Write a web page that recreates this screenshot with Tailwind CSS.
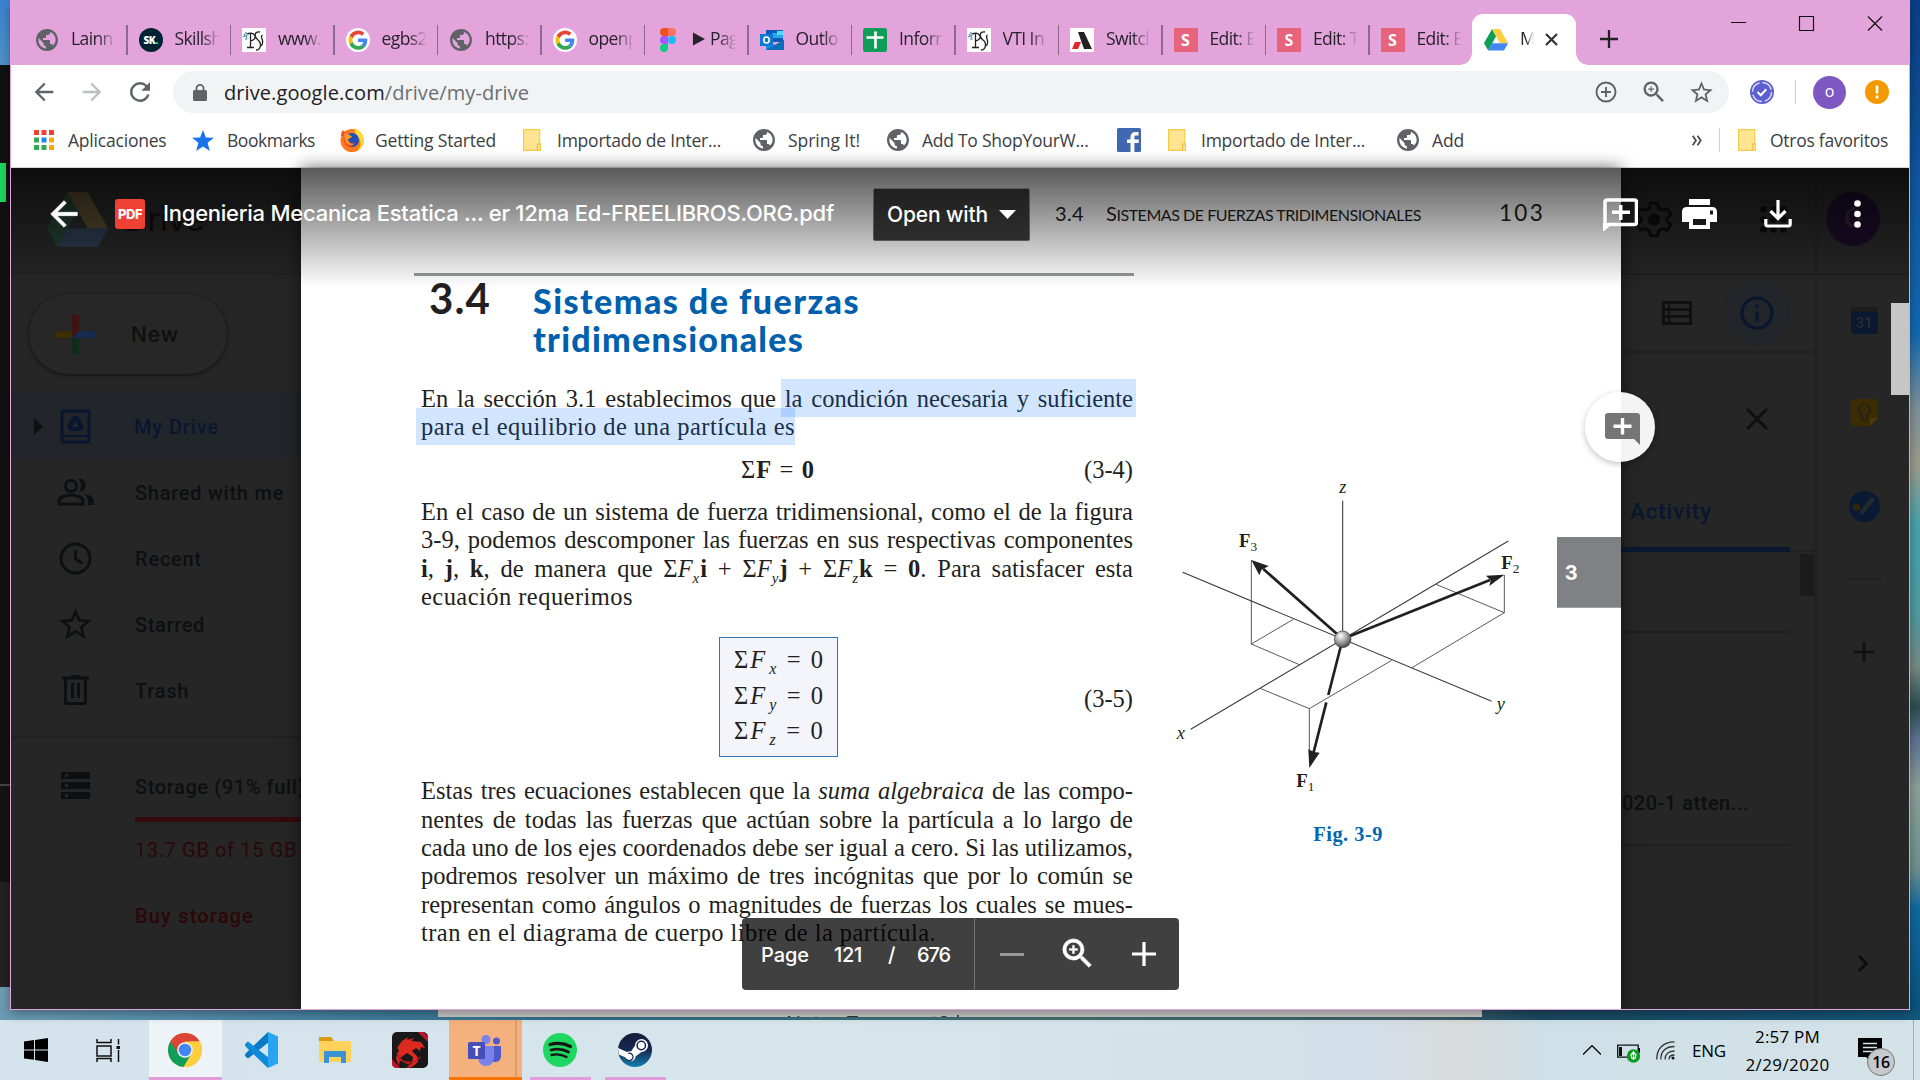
<!DOCTYPE html>
<html lang="es">
<head>
  <meta charset="UTF-8" />
  <meta name="viewport" content="width=device-width, initial-scale=1.0"/>
  <title>My Drive - Google Drive</title>
  <script src="https://cdn.jsdelivr.net/npm/@tailwindcss/browser@4"></script>
</head>
<body class="w-[1920px] h-[1080px] overflow-hidden bg-[#3d82a6]">

  <!-- Shared icons -->
  <svg class="hidden">
    <symbol id="globe" viewBox="0 0 24 24"><path fill="#5f6368" d="M12 1C5.900 1 1 5.900 1 12s4.900 11 11 11 11-4.900 11-11S18.100 1 12 1zm-1 19.500c-4.300-.5-7.600-4.200-7.600-8.500 0-.7.100-1.300.2-1.900L8.500 15v1c0 1.100 1 2.200 2.500 2.200v2.300zm6.900-3c-.3-.9-1-1.500-1.900-1.500h-1v-3c0-.6-.5-1-1-1H8v-2h2c.6 0 1-.5 1-1V7h2c1.100 0 2-.9 2-2v-.9c3.300 1.200 5.600 4.300 5.600 7.900 0 2.200-1 4.100-2.700 5.500z"/></symbol>
    <symbol id="google" viewBox="0 0 48 48"><circle cx="24" cy="24" r="24" fill="#fff"/><g transform="translate(5 5) scale(.8)"><path fill="#ea4335" d="M24 9.500c3.540 0 6.710 1.220 9.210 3.600l6.850-6.850C35.900 2.380 30.470 0 24 0 14.620 0 6.510 5.380 2.560 13.220l7.980 6.190C12.430 13.720 17.740 9.500 24 9.500z"/><path fill="#4285f4" d="M46.980 24.550c0-1.570-.15-3.090-.38-4.550H24v9.020h12.940c-.58 2.960-2.260 5.480-4.780 7.180l7.730 6c4.510-4.180 7.090-10.360 7.090-17.650z"/><path fill="#fbbc05" d="M10.530 28.590A14.500 14.500 0 0 1 9.770 24c0-1.600.27-3.140.76-4.590l-7.980-6.190A23.900 23.900 0 0 0 0 24c0 3.880.92 7.540 2.560 10.780z"/><path fill="#34a853" d="M24 48c6.480 0 11.930-2.130 15.890-5.810l-7.730-6c-2.150 1.450-4.920 2.300-8.160 2.300-6.260 0-11.570-4.220-13.470-9.910l-7.980 6.190C6.510 42.620 14.620 48 24 48z"/></g></symbol>
    <symbol id="pss" viewBox="0 0 24 24"><path fill="#fff" d="M0 0h24v24H0z"/><path fill="none" stroke="#4f93ad" stroke-width="1.300" stroke-dasharray="2 1" d="M1 9l6-3M2 6l4 5M4 4v8"/><path fill="none" stroke="#222" stroke-width="1.300" d="M8.500 5v14M5 19.500h7M5 6c8-4 12 6 3 7M18 4c-6-1-6 5-2 8s3 10-2 10M20.500 7c-3 2 1 4 0 8s-1 2-1 3"/></symbol>
    <symbol id="figma" viewBox="0 0 24 24"><path fill="#f24e1e" d="M12 0v8H8a4 4 0 0 1 0-8z"/><path fill="#ff7262" d="M12 0h4a4 4 0 0 1 0 8h-4z"/><path fill="#a259ff" d="M12 8v8H8a4 4 0 0 1 0-8z"/><circle cx="16" cy="12" r="4" fill="#1abcfe"/><path fill="#0acf83" d="M8 16h4v4a4 4 0 1 1-4-4z"/></symbol>
    <symbol id="outlook" viewBox="0 0 24 24"><path fill="#0a5cb5" d="M6 2h17v12H6z"/><path fill="#28a8ea" d="M12 5h5v5h-5zM17 5h6v5h-6z"/><path fill="#50d9ff" d="M17 3h6v4h-6z"/><path fill="#1490df" d="M6 12l9 5 9-5v10H6z"/><path fill="#0f6cbd" d="M6 22l18-10v10z"/><path fill="#0f78d4" d="M0 6h13v12H0z"/><ellipse cx="6.500" cy="12" rx="2.700" ry="3" fill="none" stroke="#fff" stroke-width="1.600"/></symbol>
    <symbol id="sheets" viewBox="0 0 24 24"><rect width="24" height="24" rx="2.500" fill="#0f9d58"/><path stroke="#fff" stroke-width="2.600" d="M12.500 3.500v17M3.500 9.500h17"/></symbol>
    <symbol id="switch" viewBox="0 0 24 24"><path fill="#fff" d="M0 0h24v24H0z"/><path fill="#222" d="M8 4h6l8 17h-8z"/><path fill="#e8222c" d="M5 14h6l-3 7H2z"/></symbol>
    <symbol id="folder" viewBox="0 0 18 22"><path fill="#ffe591" stroke="#f5cc4a" stroke-width="1.200" d="M.6.6h16.100v14.200h.8v6.600H.6z"/><path fill="none" stroke="#f0bd3a" stroke-width="1.200" d="M14.500 21v-6h3"/></symbol>
    <symbol id="drive" viewBox="0 0 24 22"><path fill="#0f9d58" d="M8 0l4.100 7.200L4.200 21.500 0 14.300z"/><path fill="#ffcd40" d="M8 0h8l8 14.300h-8z"/><path fill="#4285f4" d="M8.100 14.300H24l-4 7.200H4.200z"/></symbol>
    <symbol id="star" viewBox="0 0 24 24"><path d="M22 9.240l-7.190-.62L12 2 9.190 8.630 2 9.240l5.460 4.730L5.820 21 12 17.270 18.180 21l-1.630-7.030zM12 15.400l-3.760 2.270 1-4.280-3.320-2.880 4.380-.38L12 6.100l1.710 4.040 4.380.38-3.320 2.880 1 4.280z"/></symbol>
    <symbol id="zoom" viewBox="0 0 24 24"><path d="M15.500 14h-.79l-.28-.27A6.470 6.470 0 0 0 16 9.500 6.500 6.500 0 1 0 9.500 16c1.610 0 3.090-.59 4.230-1.570l.27.28v.79l5 4.990L20.490 19zm-6 0a4.500 4.500 0 1 1 0-9 4.500 4.500 0 0 1 0 9zm.5-7H9v2H7v1h2v2h1v-2h2V9h-2z"/></symbol>
    <symbol id="arrow" viewBox="0 0 24 24"><path d="M20 11H7.830l5.590-5.590L12 4l-8 8 8 8 1.410-1.410L7.830 13H20z"/></symbol>
  </svg>

  <div class="relative flex h-[1020px] bg-[linear-gradient(to_right,#6d9fb8,#4b87a8_15%,#2f6e8c_30%,#44706f_55%,#3c5f68_75%,#1b4a63_80%,#12577c)]">

    <!-- Left strip of the desktop -->
    <div class="w-[10px] h-[1020px] flex flex-col shrink-0">
      <div class="h-[65px] bg-[linear-gradient(#3b83d0,#4f92ca)]"></div>
      <div class="h-[98px] bg-[#111]"></div>
      <div class="h-[39px] w-[6px] bg-[#1ed760] shadow-[4px_0_0_#111]"></div>
      <div class="h-[582px] bg-[#111]"></div>
      <div class="h-[2px] bg-[#444]"></div>
      <div class="h-[96px] bg-[#141414]"></div>
      <div class="h-[105px] bg-[#232323]"></div>
      <div class="h-[33px] bg-[#6d9cb3]"></div>
    </div>

    <!-- Browser window -->
    <div class="w-[1900px] h-[1010px] shrink-0 border-x border-b border-[#e3a4dc] bg-white flex flex-col overflow-hidden shadow-[0_4px_10px_rgba(0,0,0,0.35)] z-10">

      <!-- Tab strip -->
      <div class="h-[65px] shrink-0 bg-[#e3a4dc] flex items-end text-[17.5px] text-[#27232b] font-['Open_Sans',sans-serif]">
        <div class="flex h-[51px] pl-[13px]">
          <div id="tabs" class="flex"></div>
          <div class="relative w-[103.500px] -ml-px bg-white rounded-t-[11px] flex items-center pl-[12px]">
            <div class="absolute -left-[12px] bottom-0 size-3 bg-[radial-gradient(circle_at_0_0,transparent_11.500px,white_12px)]"></div>
            <div class="absolute -right-[12px] bottom-0 size-3 bg-[radial-gradient(circle_at_100%_0,transparent_11.500px,white_12px)]"></div>
            <svg class="w-6 h-[22px] shrink-0"><use href="#drive"/></svg>
            <span class="ml-[12px] mb-[2px] w-[14px] overflow-hidden whitespace-nowrap [mask-image:linear-gradient(to_right,black_40%,transparent)]">M</span>
            <svg class="ml-[11px] size-[13px]" viewBox="0 0 13 13"><path stroke="#2f3236" stroke-width="2.200" d="M1 1l11 11M12 1L1 12"/></svg>
          </div>
        </div>
        <svg class="ml-[24px] mb-[17px] size-[18px]" viewBox="0 0 18 18"><path stroke="#222" stroke-width="2.300" d="M9 0v18M0 9h18"/></svg>
        <svg class="ml-auto mr-[25px] mb-[33px] w-[153px] h-[17px]" viewBox="0 0 153 17"><path fill="none" stroke="#111" stroke-width="1.200" d="M0 7.500h15M68.500 1.500h14v14h-14zM137 1.500l14 14M151 1.500l-14 14"/></svg>
      </div>

      <!-- Address bar -->
      <div class="h-[54px] shrink-0 pt-[6px] flex font-['Open_Sans',sans-serif]">
        <div class="h-[42px] w-[162px] pl-[19px] flex items-center">
          <svg class="size-7" fill="#5f6368"><use href="#arrow"/></svg>
          <svg class="size-7 ml-[20px] rotate-180" fill="#bdbfc1"><use href="#arrow"/></svg>
          <svg class="size-[30px] ml-[19px]" viewBox="0 0 24 24" fill="#5f6368"><path d="M17.650 6.350A7.960 7.960 0 0 0 12 4a8 8 0 1 0 7.730 10h-2.080A6 6 0 1 1 12 6c1.660 0 3.140.69 4.220 1.780L13 11h7V4z"/></svg>
        </div>
        <div class="h-[42px] w-[1556px] rounded-full bg-[#f1f3f4] flex items-center pl-[20px] text-[20px] text-[#202124]">
          <svg class="w-[14px] h-[17px] mt-px" viewBox="0 0 14 17"><rect y="6" width="14" height="11" rx="1.500" fill="#5f6368"/><path fill="none" stroke="#5f6368" stroke-width="1.800" d="M3.500 7V4.200a3.500 3.300 0 0 1 7 0V7"/></svg>
          <span class="ml-[17px] mt-px whitespace-nowrap" data-w="305">drive.google.com<span class="text-[#6b6f73]">/drive/my-drive</span></span>
          <svg class="ml-auto size-[22px]" viewBox="0 0 22 22"><path fill="none" stroke="#5f6368" stroke-width="1.900" d="M11 6v10M6 11h10M20.500 11a9.500 9.500 0 1 1-19 0 9.500 9.500 0 0 1 19 0z"/></svg>
          <svg class="ml-[23px] size-7" fill="#5f6368"><use href="#zoom"/></svg>
          <svg class="ml-[20px] mr-[14px] size-[27px]" fill="#5f6368"><use href="#star"/></svg>
        </div>
        <div class="h-[42px] flex items-center pl-[21px]">
          <svg class="size-6" viewBox="0 0 24 24"><circle cx="12" cy="12" r="12" fill="#5d5fd0"/><circle cx="12" cy="12" r="9.500" fill="none" stroke="#dfe0ff" stroke-width="1.400" stroke-dasharray="12 3"/><path fill="none" stroke="#fff" stroke-width="2" d="M7.500 12l3.300 3.300 5.500-6"/></svg>
          <div class="ml-[21px] w-px h-6 bg-[#d0d2d5]"></div>
          <div class="ml-[17px] size-[33px] rounded-full bg-[#7e57c2] text-white text-[16px] leading-[31px] text-center">o</div>
          <svg class="ml-[19px] size-6" viewBox="0 0 24 24"><circle cx="12" cy="12" r="12" fill="#f29900"/><path stroke="#fff" stroke-width="2.600" d="M12 5.500v8M12 15.500v3"/></svg>
        </div>
      </div>

      <!-- Bookmarks -->
      <div class="h-[49px] shrink-0 pb-[6px] border-b border-[#d5d6d8] flex items-center text-[17.5px] text-[#3c4043] whitespace-nowrap font-['Open_Sans',sans-serif]">
        <svg class="ml-[23px] size-5" viewBox="0 0 20 20"><path fill="#ea4335" d="M0 0h5v5H0zM7.500 0h5v5h-5zM15 0h5v5h-5z"/><path fill="#34a853" d="M0 7.500h5v5H0zM0 15h5v5H0zM7.500 15h5v5h-5z"/><path fill="#1a88f5" d="M7.500 7.500h5v5h-5z"/><path fill="#f9ab00" d="M15 7.500h5v5h-5zM15 15h5v5h-5z"/></svg>
        <div class="ml-[14px] w-[124px]"><span data-w="98.500">Aplicaciones</span></div>
        <svg class="w-[22px] h-[21px]" viewBox="0 0 22 21"><path fill="#1a73e8" d="M11 0l2.900 7.500 8.100.3-6.400 5L17.800 21 11 16.500 4.200 21l2.200-8.200-6.400-5 8.100-.3z"/></svg>
        <div class="ml-[13px] w-[113px]"><span data-w="88">Bookmarks</span></div>
        <svg class="size-6" viewBox="0 0 24 24"><circle cx="12" cy="12.500" r="11.500" fill="#ff7a1a"/><path fill="#ffd93b" d="M15 0c6 3 9 7 9 13a11.500 11.500 0 0 1-7 10c5-5 4-11 1-14-3-3-4-5-3-9z"/><circle cx="12" cy="12" r="7" fill="#1f4fb8"/><path fill="#ff4a2a" d="M1 8c0-3 1-5 2-6 1 2 2 2 4 2-1 2 0 3 3 4 2 1 0 3-2 3 0 3 3 5 7 4-2 4-7 5-10 1-2-3-2-6-1-8z"/><path fill="#ff9a1f" d="M4 5c1 0 3 0 5 2 2 1 3 1 3 2l-4 2c0 3 2 5 6 5-3 2-8 1-9-4z"/></svg>
        <div class="ml-[11px] w-[148px]"><span data-w="121">Getting Started</span></div>
        <svg class="w-[18px] h-[22px]"><use href="#folder"/></svg>
        <div class="ml-[16px] w-[195px]"><span data-w="164">Importado de Inter...</span></div>
        <svg class="size-6"><use href="#globe"/></svg>
        <div class="ml-[12px] w-[98px]"><span data-w="72">Spring It!</span></div>
        <svg class="size-6"><use href="#globe"/></svg>
        <div class="ml-[12px] w-[195px]"><span data-w="166.500">Add To ShopYourW...</span></div>
        <svg class="size-6" viewBox="0 0 24 24"><rect width="24" height="24" rx="1.500" fill="#4267b2"/><path fill="#fff" d="M13.500 24v-9h-3.500v-3.500h3.500V9c0-3 1.700-5 5-5h3v3.500h-2.300c-1.400 0-1.800.6-1.800 1.800v2.200H22l-.5 3.500h-4.100v9z"/></svg>
        <svg class="ml-[27px] w-[18px] h-[22px]"><use href="#folder"/></svg>
        <div class="ml-[15px] w-[195px]"><span data-w="164">Importado de Inter...</span></div>
        <svg class="size-6"><use href="#globe"/></svg>
        <div class="ml-[12px]"><span data-w="32">Add</span></div>
        <svg class="ml-auto mr-[17px] w-[10px] h-[11px]" viewBox="0 0 10 11"><path fill="none" stroke="#44474a" stroke-width="1.700" d="M.7.800L4 5.500.7 10.200M5.500.800l3.300 4.700-3.300 4.700"/></svg>
        <div class="w-px h-6 bg-[#cfd1d4]"></div>
        <svg class="ml-[18px] w-[18px] h-[22px]"><use href="#folder"/></svg>
        <div class="ml-[14px] w-[139px]"><span data-w="118">Otros favoritos</span></div>
      </div>

      <!-- Viewport: Drive dimmed behind the PDF viewer -->
      <div class="relative h-[841px] flex bg-[#262626] font-['Roboto',sans-serif] text-[20px] font-medium text-[#0e0f10]">

        <!-- Drive sidebar -->
        <div class="w-[290px] shrink-0 whitespace-nowrap overflow-hidden">
          <div class="h-[106px] border-b border-[#202020] flex pl-[35px] pt-[24px]">
            <svg class="w-[63px] h-[56px] opacity-20 shrink-0"><use href="#drive"/></svg>
            <span class="ml-[15px] mt-[2px] font-normal text-[33px] leading-[50px] text-[#0c0c0c] font-['Inter',sans-serif]" data-w="80">Drive</span>
          </div>
          <div class="mt-[20px] ml-[18px] w-[198px] h-[80px] rounded-full bg-[#272727] shadow-[0_1px_4px_rgba(0,0,0,0.6)] flex items-center pl-[27px]">
            <svg class="size-[39px] shrink-0" viewBox="0 0 36 36"><path fill="#431110" d="M15 0h6v15l-6 6z"/><path fill="#3f2f05" d="M0 15h15v6H0z"/><path fill="#0d2d17" d="M15 21h6v15h-6z"/><path fill="#142b52" d="M21 15h15v6H15z"/></svg>
            <span class="ml-[36px] mt-px text-[21px] font-['Inter',sans-serif]" data-w="48">New</span>
          </div>
          <div class="mt-[19px] h-[66px] bg-[#22252a] flex items-center text-[#08172f]">
            <svg class="ml-[23px] w-[9px] h-[17px] shrink-0" viewBox="0 0 9 17"><path fill="#0e0f10" d="M0 0l9 8.500L0 17z"/></svg>
            <svg class="ml-[17px] w-[31px] h-[35px] shrink-0" viewBox="0 0 31 35" fill="none" stroke="#08172f" stroke-width="3"><rect x="2" y="2" width="27" height="31" rx="2"/><path d="M2 27h27" stroke-width="2"/><path fill="#08172f" stroke="none" d="M13 7h5l6 10-3 5H10l-3-5zm2.500 5L12 18h7z"/></svg>
            <span class="ml-[43px] mt-[2px]" data-w="85">My Drive</span>
          </div>
          <div class="h-[66px] flex items-center">
            <svg class="ml-[46px] w-[37px] h-[28px] shrink-0" viewBox="0 0 37 28" fill="none" stroke="#0e0f10" stroke-width="3"><circle cx="14" cy="8" r="5.500"/><path d="M2 26v-3c0-4 7-6 12-6s12 2 12 6v3z"/><path fill="#0e0f10" stroke="none" d="M21 1c9-2 11 12 1 13 3-5 3-9-1-13zM27 16c6 1 10 3 10 7v4h-6v-4c0-3-1-5-4-7z"/></svg>
            <span class="ml-[41px] mt-[2px]" data-w="149">Shared with me</span>
          </div>
          <div class="h-[66px] flex items-center">
            <svg class="ml-[48px] size-[33px] shrink-0" viewBox="0 0 33 33" fill="none" stroke="#0e0f10" stroke-width="3"><circle cx="16.500" cy="16.500" r="14.500"/><path d="M16.500 8v9l7 4.500"/></svg>
            <span class="ml-[43px] mt-[2px]" data-w="67">Recent</span>
          </div>
          <div class="h-[66px] flex items-center">
            <svg class="ml-[45px] size-[39px] shrink-0" fill="#0e0f10"><use href="#star"/></svg>
            <span class="ml-[40px] mt-[2px]" data-w="70">Starred</span>
          </div>
          <div class="h-[66px] flex items-center">
            <svg class="ml-[51px] w-[27px] h-[30px] shrink-0" viewBox="0 0 27 30" fill="none" stroke="#0e0f10" stroke-width="3"><path d="M0 3h27M9 1.500h9M3.500 3v24q0 1.500 1.500 1.500h17q1.500 0 1.500-1.500V3M10.500 8v15M16.500 8v15"/></svg>
            <span class="ml-[46px] mt-[2px]" data-w="54">Trash</span>
          </div>
          <div class="mt-[13px] border-t-2 border-[#202020] flex items-center h-[94px]">
            <svg class="ml-[50px] mt-[2px] w-[29px] h-[27px] shrink-0" viewBox="0 0 29 27"><path fill="#0e0f10" d="M0 0h29v7H0zM0 10h29v7H0zM0 20h29v7H0z"/><path fill="#262626" d="M4 2h3v3H4zM4 12h3v3H4zM4 22h3v3H4z"/></svg>
            <span class="ml-[45px] mt-[5px]" data-w="170">Storage (91% full)</span>
          </div>
          <div class="-mt-[13px] ml-[124px] h-[5px] bg-[#330b0c]"></div>
          <div class="ml-[124px] mt-[15px] leading-[26px] font-normal text-[#2b0708]"><span data-w="162">13.7 GB of 15 GB</span></div>
          <div class="ml-[124px] mt-[40px] leading-[26px] text-[#2b0708]"><span data-w="119">Buy storage</span></div>
        </div>

        <!-- PDF page -->
        <div class="relative w-[1320px] shrink-0 bg-white text-[#231f20] shadow-[0_0_16px_rgba(0,0,0,0.6)] flex font-normal font-['Liberation_Serif',serif] text-[24.5px] leading-[28.350px] whitespace-nowrap">
          <div class="w-[833px] shrink-0 pt-[105px] pl-[113px]">
            <div class="h-[3px] bg-[#96989b]"></div>
            <div class="flex h-[109px] pl-[15px] font-['Lato',sans-serif] font-bold leading-[38px]">
              <div class="w-[104px] pt-[3px] text-[42px]"><span data-w="62">3.4</span></div>
              <div class="pt-[6px] text-[34px] text-[#0060ae] font-black">
                <div><span data-w="327">Sistemas de fuerzas</span></div>
                <div><span data-w="271">tridimensionales</span></div>
              </div>
            </div>
            <div class="ml-[7px] w-[712px]">
              <div><span data-line>En la sección 3.1 establecimos que la condición necesaria y suficiente</span></div>
              <div><span data-w="374">para el equilibrio de una partícula es</span></div>
              <div class="mt-[14px] pl-[320px] flex justify-between"><span data-w="74">Σ<b>F</b> = <b>0</b></span><span data-w="49">(3-4)</span></div>
              <div class="mt-[14px]"><span data-line>En el caso de un sistema de fuerza tridimensional, como el de la figura</span></div>
              <div><span data-line>3-9, podemos descomponer las fuerzas en sus respectivas componentes</span></div>
              <div class="h-[28.350px]"><span data-line><b>i</b>, <b>j</b>, <b>k</b>, de manera que Σ<i>F<sub class="text-[15px] bottom-[-6px]">x</sub></i><b class="ml-px">i</b> + Σ<i>F<sub class="text-[15px] bottom-[-6px]">y</sub></i><b class="ml-px">j</b> + Σ<i>F<sub class="text-[15px] bottom-[-6px]">z</sub></i><b class="ml-px">k</b> = <b>0</b>. Para satisfacer esta</span></div>
              <div><span data-w="212">ecuación requerimos</span></div>
              <div class="mt-[26px] pl-[298px] flex items-center justify-between">
                <div class="w-[119px] h-[120px] border-[1.500px] border-[#2a76b8] bg-[#f4f5fb] pl-[14px] pt-[4px] leading-[35.300px]">
                  <div class="h-[35.300px]"><span data-w="91">Σ<i>F</i><sub class="text-[16px] ml-[2px] bottom-[-6px]"><i>x</i></sub> = 0</span></div>
                  <div class="h-[35.300px]"><span data-w="91">Σ<i>F</i><sub class="text-[16px] ml-[2px] bottom-[-6px]"><i>y</i></sub> = 0</span></div>
                  <div class="h-[35.300px]"><span data-w="91">Σ<i>F</i><sub class="text-[16px] ml-[2px] bottom-[-6px]"><i>z</i></sub> = 0</span></div>
                </div>
                <span class="mt-[3px]" data-w="49">(3-5)</span>
              </div>
              <div class="mt-[20px]"><span data-line>Estas tres ecuaciones establecen que la <i>suma algebraica</i> de las compo-</span></div>
              <div><span data-line>nentes de todas las fuerzas que actúan sobre la partícula a lo largo de</span></div>
              <div><span data-line>cada uno de los ejes coordenados debe ser igual a cero. Si las utilizamos,</span></div>
              <div><span data-line>podremos resolver un máximo de tres incógnitas que por lo común se</span></div>
              <div><span data-line>representan como ángulos o magnitudes de fuerzas los cuales se mues-</span></div>
              <div><span data-w="515">tran en el diagrama de cuerpo libre de la partícula.</span></div>
            </div>
          </div>

          <!-- Figure 3-9 -->
          <div class="w-[487px] pt-[292px] pl-[26px] shrink-0">
            <svg class="w-[461px] h-[400px]" viewBox="0 0 1383 1200" font-family="Liberation Serif, serif" fill="#231f20">
              <defs><radialGradient id="ball" cx=".38" cy=".3" r=".7"><stop offset="0" stop-color="#fff"/><stop offset=".5" stop-color="#a5a7aa"/><stop offset="1" stop-color="#4d4d4f"/></radialGradient></defs>
              <g fill="none" stroke="#3a3738" stroke-width="3.200">
                <path d="M548 122V515M68 337L995 724M1045 243L92 808"/>
                <path stroke-width="2.500" d="M274 300V552L400 478M274 552L418 614M828 373L1033 458V345M1033 458L756 623M300 685L448 746L695 601M448 746V880"/>
              </g>
              <g stroke="#231f20" stroke-width="8"><path d="M548 537L310 327M548 537L990 360M548 537L505 705M499 727L460 880"/></g>
              <path d="M274 300L326 318L304 330L298 346zM1033 344L988 378L992 361L978 347zM448 924L445 868L462 876L479 878z"/>
              <circle cx="548" cy="538" r="25" fill="url(#ball)" stroke="#333" stroke-width="2"/>
              <g font-size="55" font-style="italic"><text x="538" y="100">z</text><text x="50" y="837">x</text><text x="1010" y="750">y</text></g>
              <g font-size="56" font-weight="bold"><text x="237" y="262">F<tspan font-size="40" font-weight="normal" dy="12">3</tspan></text><text x="1024" y="328">F<tspan font-size="40" font-weight="normal" dy="12">2</tspan></text><text x="409" y="982">F<tspan font-size="40" font-weight="normal" dy="12">1</tspan></text></g>
              <text x="460" y="1142" font-size="61" font-weight="bold" fill="#0066b3" textLength="207">Fig. 3-9</text>
              <path fill="#808184" d="M1191 231h192v212h-192z"/>
              <text x="1214" y="360" font-family="Inter, sans-serif" font-size="60" font-weight="bold" fill="#fff">3</text>
            </svg>
          </div>

          <!-- Text selection -->
          <div class="absolute left-[480px] top-[211px] w-[355px] h-[38px] bg-[rgb(0,110,255)]/[.175]"></div>
          <div class="absolute left-[115px] top-[240px] w-[379px] h-[37px] bg-[rgb(0,110,255)]/[.175]"></div>

          <!-- Running head of the page -->
          <div class="absolute left-[754px] top-[31px] flex items-baseline font-['Lato',sans-serif] text-[20px] leading-[28px]">
            <span class="w-[51px]"><span data-w="29">3.4</span></span>
            <span class="w-[393px]"><span data-w="315">S<span class="text-[16px]">ISTEMAS DE FUERZAS TRIDIMENSIONALES</span></span></span>
            <span class="text-[22.5px]" data-w="46">103</span>
          </div>
        </div>

        <!-- Drive details panel -->
        <div class="w-[196px] shrink-0 overflow-hidden whitespace-nowrap border-r-2 border-[#202020] pt-[105px]">
          <div class="h-[80px] border-y-2 border-[#202020] flex items-center">
            <svg class="ml-[41px] w-[30px] h-[24px] shrink-0" viewBox="0 0 30 24"><path fill="#101010" d="M0 0h30v24H0z"/><path fill="#262626" d="M3 3h3v4H3zM8 3h19v4H8zM3 10h3v4H3zM8 10h19v4H8zM3 17h3v4H3zM8 17h19v4H8z"/></svg>
            <div class="ml-[32px] size-[66px] shrink-0 rounded-full bg-[#22262a] flex items-center justify-center"><svg class="size-[34px]" viewBox="0 0 34 34" fill="none" stroke="#08172f" stroke-width="3.200"><circle cx="17" cy="17" r="15"/><path d="M17 15.500v10M17 8.500v3.500"/></svg></div>
          </div>
          <svg class="mt-[55px] ml-[125px] size-[22px]" viewBox="0 0 22 22"><path stroke="#0f0f0f" stroke-width="3" d="M1 1l20 20M21 1L1 21"/></svg>
          <div class="mt-[69px] ml-[9px] h-[48px] leading-[26px] text-[22px] text-[#08172f]"><span data-w="82">Activity</span></div>
          <div class="flex"><div class="w-[169px] h-[5px] bg-[#0a1930]"></div><div class="grow h-[2px] mt-[3px] bg-[#202020]"></div></div>
          <div class="ml-[179px] mt-[2px] w-[14px] h-[42px] bg-[#1b1b1b]"></div>
          <div class="mt-[35px] w-[169px] h-[2px] bg-[#1f1f1f]"></div>
          <div class="mt-[157px] -ml-[11px] leading-[26px]"><span data-w="139">2020-1 atten...</span></div>
          <div class="mt-[28px] w-[169px] h-[2px] bg-[#1f1f1f]"></div>
        </div>

        <!-- Drive add-ons -->
        <div class="w-[92px] shrink-0 pt-[105px]">
          <div class="border-t-2 border-[#202020] flex flex-col items-center h-full pl-[2px]">
            <div class="mt-[32px] w-[27px] h-[27px] shrink-0 rounded-[2px] border-t-[5px] border-[#1b1c1e] bg-[#0a1830] text-center text-[#282c33] text-[15px] leading-[22px]">31</div>
            <svg class="mt-[65px] size-[27px] shrink-0" viewBox="0 0 27 27"><path fill="#3c2c02" d="M2 0h23q2 0 2 2v17l-8 8H2q-2 0-2-2V2q0-2 2-2z"/><path fill="#4b3a10" d="M19 27v-8h8z"/><path fill="none" stroke="#27231a" stroke-width="2" d="M11 16v5h5v-5q3-2 3-5a5.500 5.500 0 0 0-11 0q0 3 3 5z"/></svg>
            <svg class="mt-[65px] size-[31px] shrink-0" viewBox="0 0 31 31"><circle cx="15.500" cy="15.500" r="15.500" fill="#0a1a34"/><circle cx="7.500" cy="16" r="3.600" fill="#332505"/><path stroke="#24282f" stroke-width="4.500" stroke-linecap="round" d="M13 21l10-12"/></svg>
            <div class="mt-[56px] w-[33px] h-[2px] shrink-0 bg-[#1f1f1f]"></div>
            <svg class="mt-[62px] size-5 shrink-0" viewBox="0 0 20 20"><path stroke="#0f0f0f" stroke-width="2.600" d="M10 0v20M0 10h20"/></svg>
            <svg class="mt-[293px] mr-[2px] w-[10px] h-[17px] shrink-0" viewBox="0 0 10 17"><path fill="none" stroke="#0d0d0d" stroke-width="2.800" d="M1 1l7.500 7.500L1 16"/></svg>
          </div>
        </div>

        <!-- Dimmed header icons -->
        <div class="absolute right-[29px] top-[24px] flex items-center">
          <svg class="size-[36px]" viewBox="0 0 36 36"><path fill="none" stroke="#0c0c0c" stroke-width="2.800" d="M14.500 2h7l1 5 4 2.300 4.800-1.700 3.500 6-3.800 3.400v3l3.800 3.400-3.500 6-4.800-1.700-4 2.300-1 5h-7l-1-5-4-2.300-4.800 1.700-3.500-6L5 20v-3l-3.800-3.400 3.500-6 4.800 1.700 4-2.300z"/><circle cx="18" cy="18.500" r="6" fill="#0c0c0c"/></svg>
          <svg class="ml-[88px] size-[27px]" viewBox="0 0 27 27" fill="#0a0a0a"><circle cx="3.500" cy="3.500" r="3.300"/><circle cx="13.500" cy="3.500" r="3.300"/><circle cx="23.500" cy="3.500" r="3.300"/><circle cx="3.500" cy="13.500" r="3.300"/><circle cx="13.500" cy="13.500" r="3.300"/><circle cx="23.500" cy="13.500" r="3.300"/><circle cx="3.500" cy="23.500" r="3.300"/><circle cx="13.500" cy="23.500" r="3.300"/><circle cx="23.500" cy="23.500" r="3.300"/></svg>
          <div class="ml-[39px] size-[54px] rounded-full bg-[#1a0c27] text-[#2c2633] text-[26px] leading-[52px] text-center">O</div>
        </div>

        <!-- Viewer toolbar -->
        <div class="absolute inset-x-0 top-0 h-[120px] bg-[linear-gradient(rgba(0,0,0,0.65),transparent)]"></div>
        <div class="absolute inset-x-0 top-0 h-[92px] flex items-center text-white text-[22px] whitespace-nowrap font-['Inter',sans-serif]">
          <svg class="ml-[33px] size-[40px] shrink-0" fill="#fff" stroke="#fff" stroke-width=".4"><use href="#arrow"/></svg>
          <div class="ml-[31px] size-[30px] shrink-0 rounded-[3px] bg-[#ee4033] text-center text-[13px] leading-[30px] font-extrabold"><span data-w="24">PDF</span></div>
          <div class="ml-[18px] mb-[2px] w-[710px] shrink-0"><span data-w="671">Ingenieria Mecanica Estatica ... er 12ma Ed-FREELIBROS.ORG.pdf</span></div>
          <div class="h-[53px] w-[157px] shrink-0 rounded-[2px] border border-[#555] bg-[linear-gradient(#202020,#2e2e2e)] flex items-center pl-[13px] text-[21px] mt-px"><span data-w="101">Open with</span><svg class="ml-[11px] w-[17px] h-[9px]" viewBox="0 0 17 9"><path fill="#fff" d="M0 0h17L8.500 9z"/></svg></div>
          <svg class="ml-[573px] w-[35px] h-[33px] shrink-0" viewBox="0 0 35 33"><path fill="none" stroke="#fff" stroke-width="3.500" d="M2 30V4q0-2 2-2h27.500q2 0 2 2v20.500q0 2-2 2H6z"/><path fill="#fff" d="M0 33v-8h9zM16 7h3.500v15H16z"/><path fill="#fff" d="M9 12.500h18V16H9z"/></svg>
          <svg class="ml-[44px] w-[35px] h-[30px] shrink-0" viewBox="0 0 35 30"><path fill="#fff" fill-rule="evenodd" d="M7 0h21v6H7zM5 8h25q5 0 5 5v10h-7v7H7v-7H0V13q0-5 5-5zm6 12v6h13v-6zM28 11.500v4h3v-4z"/></svg>
          <svg class="ml-[47px] w-[28px] h-[28px] shrink-0" viewBox="0 0 28 28" fill="none" stroke="#fff" stroke-width="3.200"><path d="M14 0v17M6.500 11l7.500 7.500 7.500-7.500M1.800 19v5q0 2 2 2h20.400q2 0 2-2v-5"/></svg>
          <svg class="ml-[62px] w-[7px] h-[28px] shrink-0" viewBox="0 0 7 28" fill="#fff"><circle cx="3.500" cy="3.500" r="3.300"/><circle cx="3.500" cy="14" r="3.300"/><circle cx="3.500" cy="24.500" r="3.300"/></svg>
        </div>

        <!-- Floating comment button -->
        <div class="absolute left-[1574px] top-[224px] size-[70px] rounded-full bg-white/95 shadow-[0_2px_6px_rgba(0,0,0,0.25)] flex items-center justify-center">
          <svg class="w-[35px] h-[32px] ml-[5px] mt-[3px]" viewBox="0 0 35 32"><path fill="#757575" d="M3 0h29q3 0 3 3v29l-6-6H3q-3 0-3-3V3q0-3 3-3z"/><path stroke="#fff" stroke-width="3.400" d="M17.500 5v16.500M8.500 13.300h18"/></svg>
        </div>

        <!-- Page controls -->
        <div class="absolute left-[731px] top-[750px] w-[437px] h-[72px] rounded-[4px] bg-black/75 flex items-center text-white text-[20px] font-['Inter',sans-serif]">
          <div class="w-[233px] h-full border-r-[1.500px] border-[#747474] flex items-center pl-[19px] pt-px">
            <div class="w-[73px]"><span data-w="48">Page</span></div>
            <div class="w-[54px]"><span data-w="28">121</span></div>
            <div class="w-[29px]">/</div>
            <span data-w="33">676</span>
          </div>
          <div class="ml-[25px] w-6 h-[3px] bg-[#999]"></div>
          <svg class="ml-[34px] size-[39px] mb-[2px]" fill="#fff" stroke="#fff" stroke-width=".4"><use href="#zoom"/></svg>
          <svg class="ml-[35px] size-6" viewBox="0 0 24 24"><path stroke="#fff" stroke-width="3.200" d="M12 0v24M0 12h24"/></svg>
        </div>

        <!-- Scrollbar thumb -->
        <div class="absolute right-0 top-[135px] w-[18px] h-[92px] bg-[#c6c6c6]"></div>
      </div>
    </div>

    <!-- Right strip of the desktop -->
    <div class="w-[10px] h-[1010px] shrink-0 bg-[linear-gradient(#0a3f85,#1059a3_20%,#1169b0_33%,#7a8f9a_40%,#9c9c8c_46%,#45a3ac_52%,#4f9aa0_61%,#778a85_66%,#2d4d50_70%,#5c7190_73%,#8ba29a_78%,#6f918f_86%,#0e6aa0_90%,#0a5380)]"></div>

    <!-- Document window peeking out below the browser -->
    <div class="absolute left-[438px] top-[1005px] w-[1044px] h-[12px] bg-[#cfcdca] overflow-hidden pl-[348px] text-[20px] leading-[36px] text-[#333] font-['Open_Sans',sans-serif] whitespace-pre">Nota   Transport2 l</div>
  </div>

  <!-- Taskbar -->
  <div class="h-[60px] flex bg-[linear-gradient(to_right,#d5e3ec,#d6e6ec_40%,#d4e3ea_62%,#d3dfe8_71%,#d9dbdb_76%,#cfdfe7_80%,#d3e3e8)] text-black font-['Open_Sans',sans-serif]">
    <div class="w-[73px] h-[60px] flex items-center justify-center pr-px"><svg class="w-6 h-6" viewBox="0 0 24 24"><path d="M0 3.500l10-1.400v9.300H0zM11 2l13-2v11.400H11zM0 12.500h10v9.300L0 20.400zM11 12.500h13V24l-13-2z"/></svg></div>
    <div class="w-[76px] h-[60px] flex items-center pl-[23px]"><svg class="w-6 h-[23px]" viewBox="0 0 24 23" fill="none" stroke="#111" stroke-width="1.500"><path d="M1 0v3.500h14V0M1 7h14v10H1zM1 23v-3.500h14V23M22.500 0v5.500M22.500 11v12"/><path fill="#111" stroke="none" d="M20.500 7h3.500v3h-3.500z"/></svg></div>
    <div class="w-[73px] h-[60px] flex items-center justify-center pr-[2px] bg-[#eef3f8] border-b-[3px] border-[#e29bdb]"><svg class="size-[34px] mt-[3px]" viewBox="0 0 48 48"><circle cx="24" cy="24" r="24" fill="#ffcd40"/><path fill="#db4437" d="M3.200 12A24 24 0 0 1 44.800 12H24l-11 18z"/><path fill="#0f9d58" d="M3.200 12A24 24 0 0 0 22 48l11-18-18-1z"/><path fill="#ffcd40" d="M44.800 12A24 24 0 0 1 22 48l11.500-19-3-17z"/><circle cx="24" cy="24" r="11" fill="#f1f1f1"/><circle cx="24" cy="24" r="8.800" fill="#4285f4"/></svg></div>
    <div class="w-[76px] h-[60px] flex items-center justify-center"><svg class="size-9" viewBox="0 0 36 36"><path fill="#0779c7" d="M26 0L4 21q-2 2 0 4l2 1.500L27 10z"/><path fill="#0d8bd9" d="M26 36L4 15q-2-2 0-4l2-1.500L27 26z"/><path fill="#27a4f2" d="M26 0l10 4.500v27L26 36z"/></svg></div>
    <div class="w-[74px] h-[60px] flex items-center justify-center"><svg class="w-8 h-[27px]" viewBox="0 0 32 27"><path fill="#dc9a0e" d="M0 0h12l3 4v4H0z"/><path fill="#ffd35b" d="M0 4h31q1 0 1 1v19q0 1-1 1H1q-1 0-1-1z"/><path fill="#3a93d6" d="M5 26V15q0-1 1-1h20q1 0 1 1v11h-5v-6H10v6z"/></svg></div>
    <div class="w-[77px] h-[60px] flex items-center justify-center pr-[2px]"><svg class="size-9" viewBox="0 0 36 36"><rect width="36" height="36" rx="5" fill="#19191a"/><path fill="#dd2a20" d="M5 16l5-7 6-4-1 3 7-2-3 3 10 1 4 6-4-1-1 4-4-3-4 3 5 5 1 6-6 5-6 1 6-5 1-6-6-4-7 5-1 8-3-8 3-8z"/><path fill="none" stroke="#b51d1b" stroke-width="1.500" d="M5 21c3 8 8 10 15 12M8 28c6 3 16 4 20-3"/><path fill="#c4142c" d="M26 0h6l4 5v5zM0 27l8 9H4q-4-1-4-4z"/></svg></div>
    <div class="relative w-[73px] h-[60px] flex items-center justify-center bg-[#f5b17d] border-b-[3px] border-[#ff7300] after:absolute after:right-[5px] after:top-0 after:w-[2px] after:h-[57px] after:bg-[#dd9d6c]"><svg class="w-[33px] h-[31px] ml-[-2px] mt-[3px]" viewBox="0 0 33 31"><circle cx="18" cy="4.500" r="4.500" fill="#7b83eb"/><circle cx="28.500" cy="6" r="3.500" fill="#5059c9"/><path fill="#5059c9" d="M22 11h11v11q-1 5-6 5h-5z"/><path fill="#7b83eb" d="M10 11h16v12q-1 8-8 8t-8-8z"/><rect y="7" width="17" height="17" rx="1.500" fill="#464eb8"/><text x="4.500" y="20.500" font-family="Open Sans, sans-serif" font-weight="bold" font-size="14" fill="#fff">T</text></svg></div>
    <div class="ml-[8px] w-[61px] h-[60px] flex items-center justify-center border-b-[3px] border-[#e29bdb]"><svg class="size-[34px] mt-[3px] ml-[-2px]" viewBox="0 0 34 34"><circle cx="17" cy="17" r="17" fill="#1ed760"/><g fill="none" stroke="#191414" stroke-linecap="round"><path stroke-width="3.200" d="M7 11.500q11-3 20.500 2"/><path stroke-width="2.800" d="M8 17q9.500-2.500 17.500 2"/><path stroke-width="2.400" d="M8.500 22q8-2 15 2"/></g></svg></div>
    <div class="ml-[14px] w-[61px] h-[60px] flex items-center justify-center pr-[2px] border-b-[3px] border-[#e29bdb]"><svg class="size-[34px] mt-[3px]" viewBox="0 0 34 34"><defs><linearGradient id="steam" x2="0" y2="1"><stop offset="0" stop-color="#171a3a"/><stop offset=".5" stop-color="#14294f"/><stop offset="1" stop-color="#1480b6"/></linearGradient></defs><circle cx="17" cy="17" r="17" fill="url(#steam)"/><path fill="#fff" d="M0 15l9 4q2-1 4-.5l4-6a6.500 6.500 0 1 1 6.500 6.500l-6 4.500a5 5 0 0 1-9.800 1L.8 21.500z"/><circle cx="23.300" cy="12.500" r="4.200" fill="none" stroke="#17264c" stroke-width="1.500"/><path fill="none" stroke="#17264c" stroke-width="1.200" d="M10 20.500a3.600 3.600 0 1 1-1.500 5.500"/></svg></div>

    <!-- Tray -->
    <div class="ml-auto flex items-center text-[17px] whitespace-nowrap">
      <svg class="w-[18px] h-[10px]" viewBox="0 0 18 10"><path fill="none" stroke="#111" stroke-width="1.400" d="M0 9.500L9 .700l9 8.800"/></svg>
      <svg class="ml-[16px] w-[24px] h-[19px] mt-[6px]" viewBox="0 0 24 19"><path fill="none" stroke="#111" stroke-width="1.300" d="M.7 1.200h20.500v12H.7z"/><path fill="#111" d="M2 3h3v9H2zM21 4h2v5h-2z"/><circle cx="16.500" cy="12" r="6.700" fill="#0b9b23"/><path fill="none" stroke="#fff" stroke-width="1.200" d="M16.500 8l-2.500 3 1 3.500h3l1-3.500zM16.500 10v6"/></svg>
      <svg class="ml-[15px] w-[19px] h-[19px]" viewBox="0 0 19 19" fill="none" stroke="#333" stroke-width="1.300"><path d="M.8 18.500C.5 8 7 .800 18.500.800M4.800 18.500C4.800 10 10 5.500 18.500 5.500M9 18.500c0-5 3-8.500 9.500-8.500M13 18.500c0-3 2-4.500 5.500-4.500"/><circle cx="17" cy="17" r="1.500" fill="#111" stroke="none"/></svg>
      <span class="ml-[17px] mt-px w-[53px]"><span data-w="34">ENG</span></span>
      <div class="w-[85px] mt-px text-center leading-[28px]"><div><span data-w="65">2:57 PM</span></div><div><span data-w="84">2/29/2020</span></div></div>
      <div class="relative ml-[28px] w-[56px] h-[60px] border-r border-[#9fadb6]">
        <svg class="absolute left-0 top-[18px] w-6 h-[23px]" viewBox="0 0 24 23"><path d="M0 0h24v19H12v4l-4-4H0z"/><path stroke="#d6e4ec" stroke-width="1.300" d="M5 5.500h14M5 9.500h14M5 13.500h14"/></svg>
        <div class="absolute left-[9px] top-[28px] size-[28px] rounded-full border border-[#777] bg-[#c5c9cc] text-center text-[16px] leading-[26px] font-semibold tracking-[-0.5px]">16</div>
      </div>
      <div class="w-[6px]"></div>
    </div>
  </div>

  <script>
    const svgIcon = name => `<svg class="size-6 shrink-0"><use href="#${name}"/></svg>`;
    const skillshare = `<div class="size-6 shrink-0 rounded-full bg-[#002333] text-white font-extrabold text-[10px] leading-6 text-center tracking-[-0.5px]">SK<span class="text-[#00ff84]">.</span></div>`;
    const sIcon = `<div class="size-6 shrink-0 bg-[#e8637c] text-white font-bold text-[16px] leading-6 text-center">S</div>`;
    const play = `<svg class="inline w-[13px] h-[14px] mr-[5px] mb-[3px]" viewBox="0 0 14 14"><path fill="#27232b" d="M1 0l13 7L1 14z"/></svg>`;

    const tabs = [
      [svgIcon("globe"), "Lainn"],
      [skillshare, "Skillsh"],
      [svgIcon("pss"), "www."],
      [svgIcon("google"), "egbs2"],
      [svgIcon("globe"), "https:"],
      [svgIcon("google"), "openp"],
      [svgIcon("figma"), play + "Pag"],
      [svgIcon("outlook"), "Outlo"],
      [svgIcon("sheets"), "Inforr"],
      [svgIcon("pss"), "VTI In"],
      [svgIcon("switch"), "Switcl"],
      [sIcon, "Edit: E"],
      [sIcon, "Edit: T"],
      [sIcon, "Edit: E"],
    ];

    document.getElementById("tabs").innerHTML = tabs.map(([icon, title]) => `
      <div class="relative w-[103.500px] pl-[11px] flex items-center gap-[12px] after:absolute after:right-0 after:top-[11px] after:h-[30px] after:w-[1.500px] after:bg-[#8d6a8b] last:after:hidden">
        ${icon}<span class="w-[45px] mb-[2px] overflow-hidden whitespace-nowrap tracking-[-0.6px] [mask-image:linear-gradient(to_right,black_60%,transparent)]">${title}</span>
      </div>`).join("");

    function fitText() {
      // labels: letter spacing up to the given width
      document.querySelectorAll("[data-w]").forEach(el => {
        el.style.display = "inline-block";
        el.style.whiteSpace = "nowrap";
        el.style.letterSpacing = "0px";
        const gap = (el.dataset.w - el.getBoundingClientRect().width) / el.textContent.length;
        el.style.letterSpacing = gap + "px";
      });

      // lines of the book: word spacing up to the column width
      document.querySelectorAll("[data-line]").forEach(el => {
        const spaces = el.textContent.split(" ").length - 1;
        el.style.letterSpacing = "0px";
        el.style.wordSpacing = "0px";
        let rest = 712 - el.getBoundingClientRect().width;
        if (rest < -spaces) {
          el.style.letterSpacing = (rest + spaces) / el.textContent.length + "px";
          rest = 712 - el.getBoundingClientRect().width;
        }
        el.style.wordSpacing = rest / spaces + "px";
      });
    }

    fitText();
    window.addEventListener("load", fitText);
    new ResizeObserver(fitText).observe(document.body);
    document.fonts.ready.then(fitText);
  </script>
</body>
</html>
